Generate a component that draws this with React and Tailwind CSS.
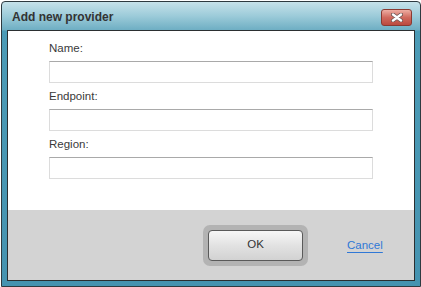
import { useState } from 'react'

export default function App() {
  const [name, setName] = useState('')
  const [endpoint, setEndpoint] = useState('')
  const [region, setRegion] = useState('')

  return (
    <div className="w-[421px] h-[287px] bg-white pt-px pl-px font-['Liberation_Sans',Arial,sans-serif]">
      <div className="w-[420px] h-[286px] border border-[#2e3a40] rounded-t-[4px] px-[5px] pb-[5px] bg-[linear-gradient(to_bottom,#c6e2ea_0px,#9ccbd9_14px,#6eaec3_28px,#4c9bb6_29px,#4593b0_100%)]">
        <div className="h-[28px] flex items-center justify-between pl-[5px] pr-[3px]">
          <span className="text-[12px] font-bold text-[#333] leading-none pt-[1px]">Add new provider</span>
          <button className="w-[31px] h-[17px] mt-[2px] rounded-[3px] border border-[#8a3a32] bg-[linear-gradient(to_bottom,#eeaea3,#d06a5e_50%,#bb4a3f)] flex items-center justify-center">
            <svg width="12" height="9" viewBox="0 0 12 9">
              <path d="M2 1.5 L10 7.5 M10 1.5 L2 7.5" stroke="#6b5552" strokeWidth="4" strokeLinecap="round" />
              <path d="M2 1.5 L10 7.5 M10 1.5 L2 7.5" stroke="#ffffff" strokeWidth="2.4" strokeLinecap="round" />
            </svg>
          </button>
        </div>
        <div className="border border-[#2b2f31] bg-white">
          <div className="h-[179px] pt-[10px] pl-[41px]">
            <Field label="Name:" value={name} onChange={setName} />
            <Field label="Endpoint:" value={endpoint} onChange={setEndpoint} />
            <Field label="Region:" value={region} onChange={setRegion} />
          </div>
          <div className="h-[70px] bg-[#d3d3d3] flex items-center pl-[195px]">
            <div className="w-[105px] h-[41px] rounded-[7px] bg-[#b3b3b3] p-[5px]">
              <button className="w-[95px] h-[31px] rounded-[4px] border border-[#5a5a5a] bg-[linear-gradient(to_bottom,#f7f7f7,#e2e2e2_50%,#d2d2d2)] text-[11.5px] text-[#333]">
                OK
              </button>
            </div>
            <a href="#" className="ml-[39px] mt-[1px] text-[11.5px] text-[#2f78d6] underline underline-offset-[3px]">
              Cancel
            </a>
          </div>
        </div>
      </div>
    </div>
  )
}

function Field({ label, value, onChange }) {
  return (
    <div className="mb-[6px]">
      <div className="h-[14px] leading-[14px] text-[11.5px] text-[#3a3a3a] mb-[6px]">{label}</div>
      <input
        value={value}
        onChange={(e) => onChange(e.target.value)}
        className="block w-[324px] h-[22px] border border-[#dcdcdc] border-t-[#a9a9a9] bg-white outline-none px-1 text-[11.5px]"
      />
    </div>
  )
}
